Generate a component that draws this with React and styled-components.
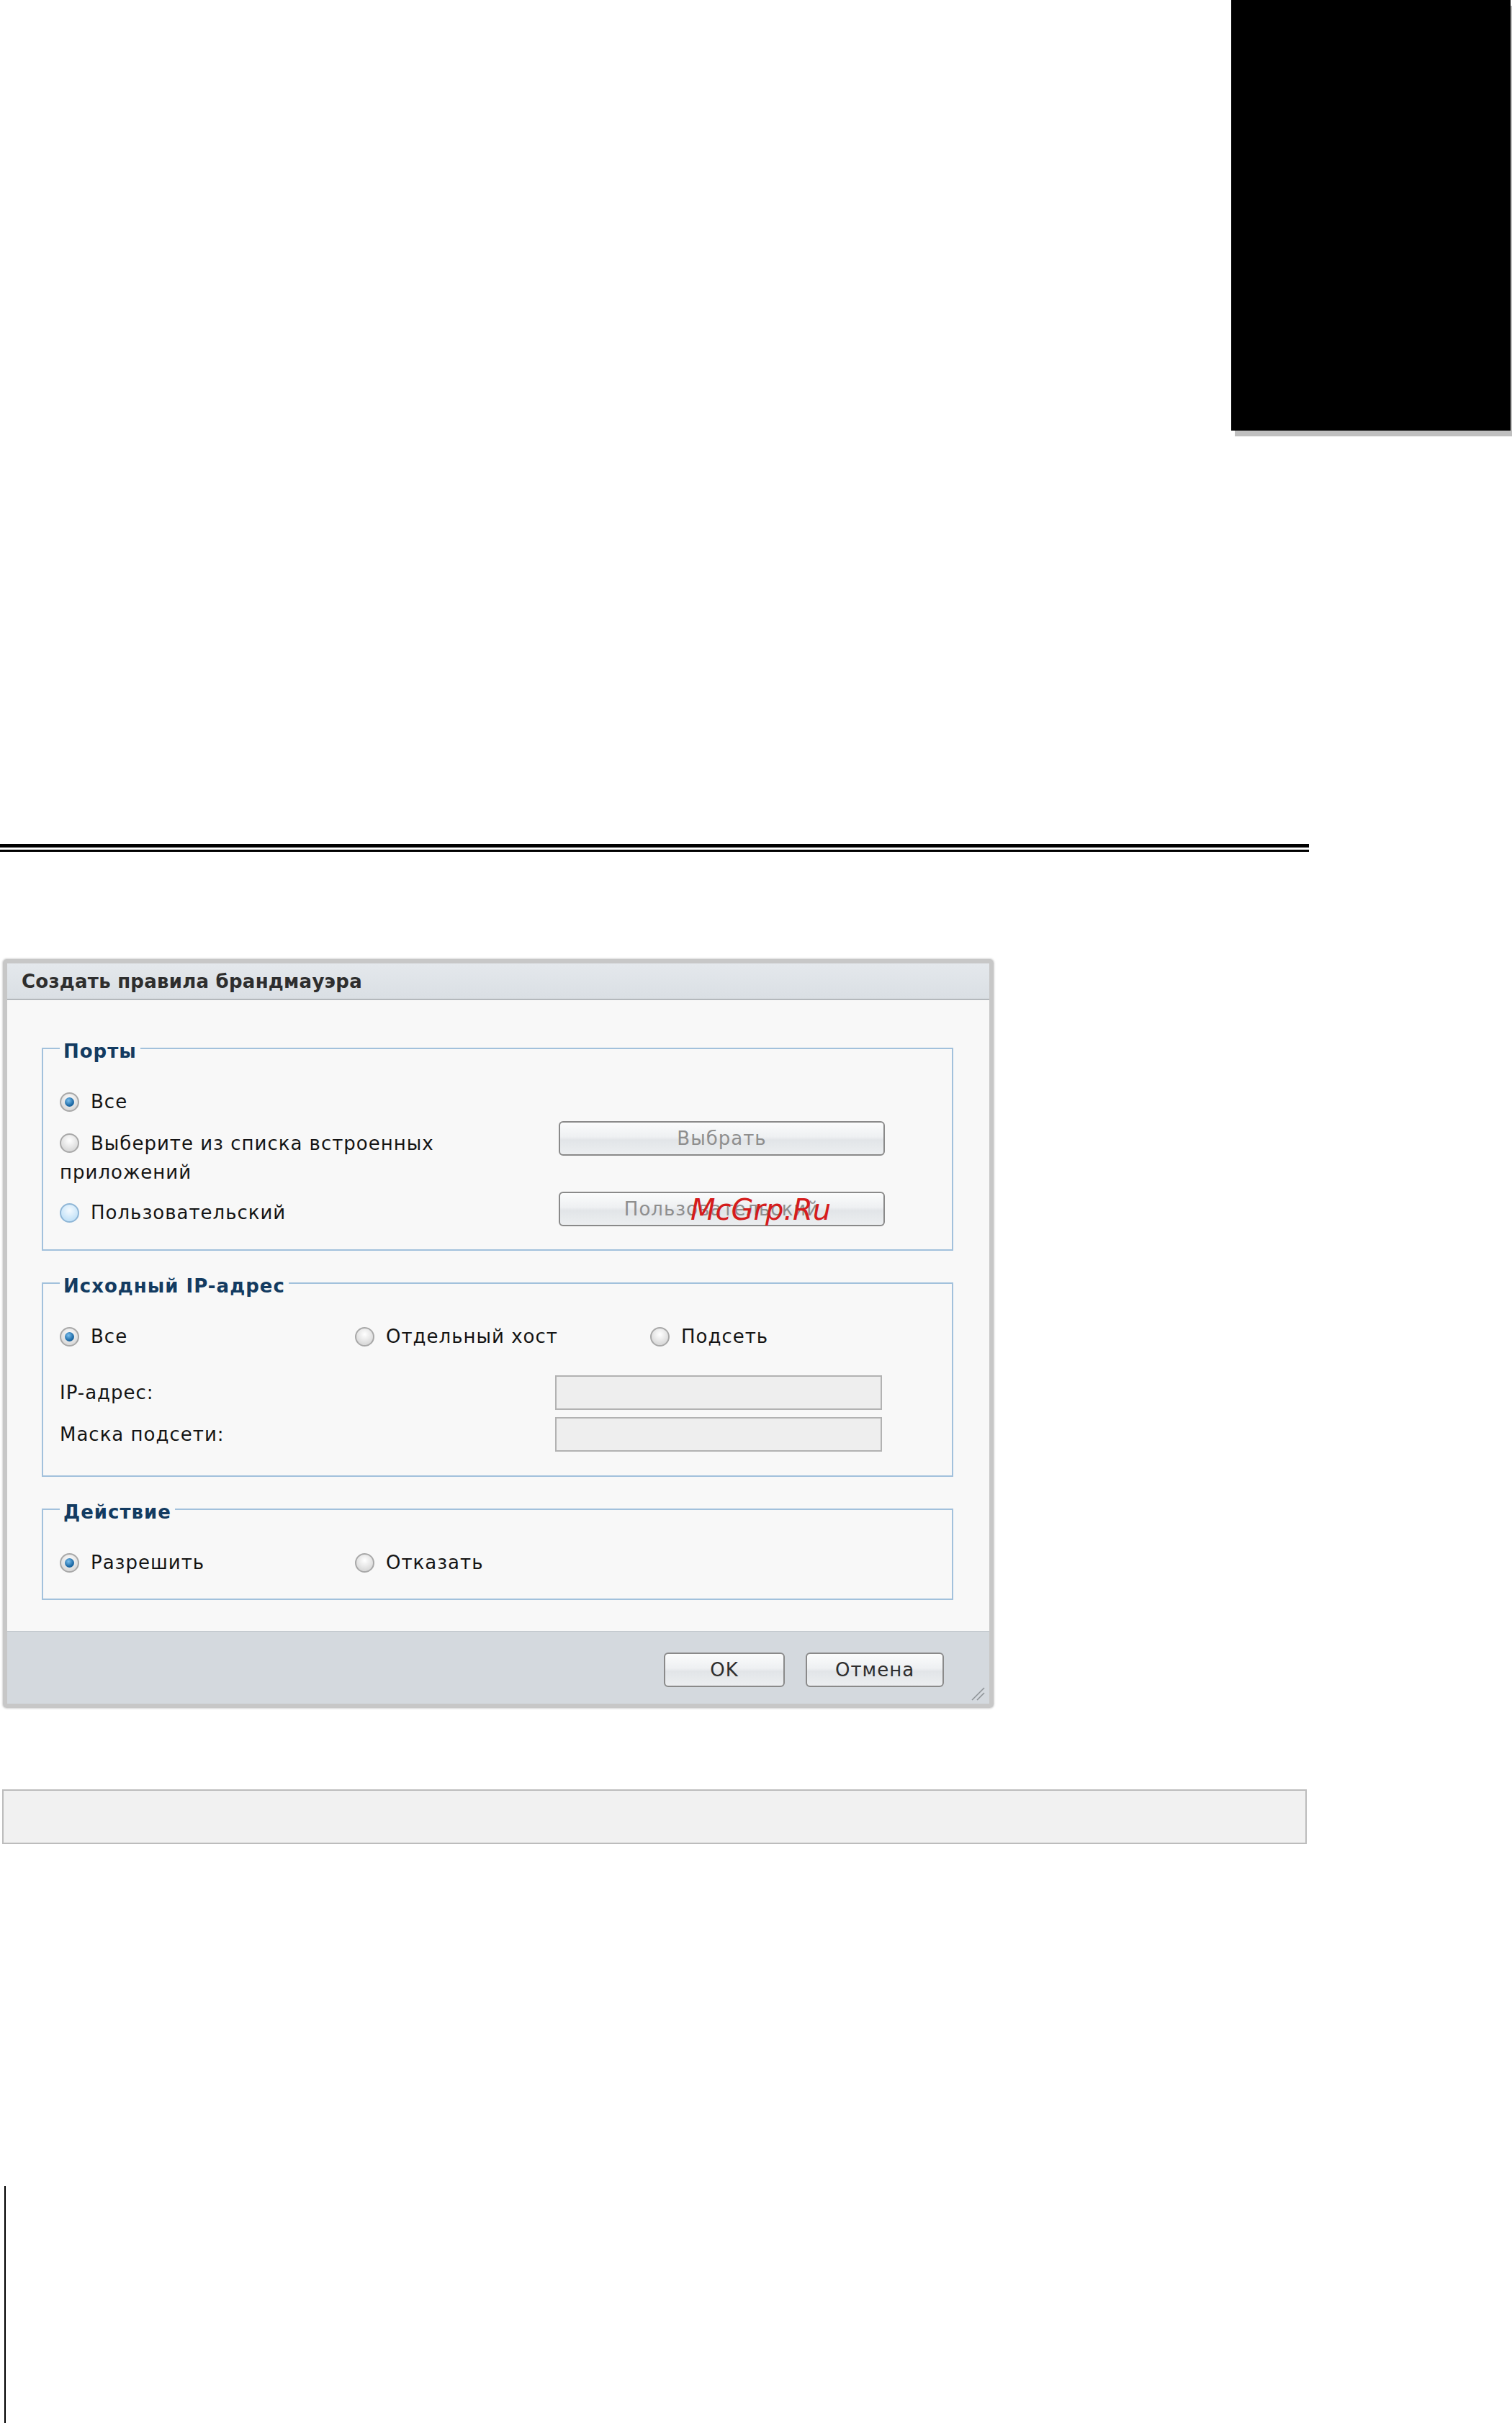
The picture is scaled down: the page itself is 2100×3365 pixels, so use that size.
import React from 'react';
import styled, { createGlobalStyle, css } from 'styled-components';

const Global = createGlobalStyle`
  html, body { margin: 0; padding: 0; background: #fff; }
  body { font-family: "DejaVu Sans", Verdana, sans-serif; }
`;

const textFont = css`
  font: 26px/40px "DejaVu Sans", Verdana, sans-serif;
  letter-spacing: 1px;
  color: #141414;
`;

const Page = styled.div`
  width: 2100px;
  height: 3365px;
  overflow: hidden;
  display: flex;
  flex-direction: column;
  background: #fff;
`;

const TopArea = styled.div`
  height: 1172px;
  flex-shrink: 0;
  display: flex;
  justify-content: flex-end;
  align-items: flex-start;
`;

const ChapterTab = styled.div`
  width: 388px;
  height: 598px;
  background: #000;
  box-shadow: 5px 8px 0 #bfbfbf;
  margin-right: 2px;
`;

const DoubleRule = styled.div`
  width: 1818px;
  height: 11px;
  flex-shrink: 0;
  box-sizing: border-box;
  border-top: 5px solid #000;
  border-bottom: 3px solid #000;
`;

const Dialog = styled.div`
  position: relative;
  flex-shrink: 0;
  margin: 149px 0 0 4px;
  width: 1376px;
  box-sizing: border-box;
  border: 6px solid #c7c7c7;
  border-radius: 5px;
  box-shadow: 0 0 3px rgba(0, 0, 0, 0.35);
  display: flex;
  flex-direction: column;
`;

const TitleBar = styled.div`
  height: 49px;
  border-bottom: 2px solid #b4b8bc;
  background: linear-gradient(#e4e8ec, #dadfe4);
  display: flex;
  align-items: center;
  padding: 0 20px;
  font: bold 26px "DejaVu Sans", Verdana, sans-serif;
  letter-spacing: 0.25px;
  color: #2e2e2e;
`;

const Body = styled.div`
  height: 877px;
  box-sizing: border-box;
  background: #f8f8f8;
  border-bottom: 1px solid #bfc5ca;
  padding: 47px 50px 0 48px;
  display: flex;
  flex-direction: column;
`;

const Group = styled.fieldset`
  margin: ${p => p.$mt || 0}px 0 0 0;
  padding: 34px 0 ${p => p.$pb}px 23px;
  border: 2px solid #a2c1dc;
  min-width: 0;
`;

const Legend = styled.legend`
  padding: 8px 5px 0;
  font: bold 26px/32px "DejaVu Sans", Verdana, sans-serif;
  letter-spacing: 1px;
  color: #133b61;
`;

const PortsGrid = styled.div`
  display: grid;
  grid-template-columns: 693px 453px;
  grid-template-rows: 40px auto auto;
  row-gap: 7px;
  align-items: start;
`;

const Choice = styled.label`
  display: flex;
  align-items: center;
  gap: 16px;
  min-height: 40px;
  margin-top: ${p => p.$mt || 0}px;
  ${textFont};
  white-space: nowrap;
`;

const Wrapping = styled.div`
  ${textFont};
  width: 620px;
  margin-top: ${p => p.$mt || 0}px;
`;

const RadioDot = styled.span`
  position: relative;
  display: inline-block;
  vertical-align: middle;
  flex: none;
  width: 27px;
  height: 27px;
  box-sizing: border-box;
  border-radius: 50%;
  border: 2px solid ${p => (p.$state === 'hover' ? '#8fb6d6' : '#a8a8a8')};
  background: ${p =>
    p.$state === 'hover'
      ? 'radial-gradient(circle at 50% 35%, #f4faff 0%, #bfe0f7 80%)'
      : 'radial-gradient(circle at 50% 35%, #ffffff 0%, #d4d4d4 85%)'};
  ${p =>
    p.$state === 'checked' &&
    css`
      &::after {
        content: '';
        position: absolute;
        left: 50%;
        top: 50%;
        width: 13px;
        height: 13px;
        margin: -6.5px 0 0 -6.5px;
        border-radius: 50%;
        background: radial-gradient(circle at 40% 35%, #7cc0ee 0%, #1d6aa6 60%, #0c4f86 100%);
      }
    `}
`;

const InlineRadio = styled(RadioDot)`
  margin: -4px 16px 0 0;
`;

const Button = styled.button`
  height: 48px;
  width: ${p => p.$w}px;
  margin-top: ${p => p.$mt || 0}px;
  box-sizing: border-box;
  border: 2px solid #8a8a8a;
  border-radius: 6px;
  background: linear-gradient(#fbfcfc 0%, #eef0f2 45%, #e2e5e8 55%, #eceef0 100%);
  font: 26px "DejaVu Sans", Verdana, sans-serif;
  letter-spacing: 1px;
  color: ${p => (p.$disabled ? '#8e8e8e' : '#2e2e2e')};
  padding: 0;
  display: flex;
  align-items: center;
  justify-content: center;
`;

const RadioRow = styled.div`
  display: grid;
  grid-template-columns: 410px 410px auto;
`;

const FieldGrid = styled.div`
  display: grid;
  grid-template-columns: 688px 454px;
  row-gap: 10px;
  margin-top: 34px;
  align-items: center;
`;

const FieldLabel = styled.span`
  ${textFont};
`;

const TextBox = styled.div`
  height: 48px;
  box-sizing: border-box;
  border: 2px solid #b2b2b2;
  background: #eeeeee;
`;

const Footer = styled.div`
  position: relative;
  height: 100px;
  box-sizing: border-box;
  background: #d4d9de;
  display: flex;
  justify-content: flex-end;
  align-items: flex-start;
  gap: 29px;
  padding: 29px 63px 0 0;
`;

const Grip = styled.svg`
  position: absolute;
  right: 6px;
  bottom: 4px;
`;

const Watermark = styled.span`
  position: absolute;
  left: 949px;
  top: 322px;
  font: italic 40px/40px "DejaVu Sans", Verdana, sans-serif;
  color: #d51c1c;
  pointer-events: none;
`;

const NoteBox = styled.div`
  flex-shrink: 0;
  margin: 113px 0 0 3px;
  width: 1812px;
  height: 76px;
  box-sizing: border-box;
  border: 2px solid #bcbcbc;
  background: #f1f1f1;
`;

const MarginBar = styled.div`
  flex-shrink: 0;
  margin: 475px 0 0 6px;
  width: 2px;
  height: 340px;
  background: #000;
`;

export default function App() {
  return (
    <>
      <Global />
      <Page>
        <TopArea>
          <ChapterTab />
        </TopArea>
        <DoubleRule />
        <Dialog>
          <TitleBar>Создать правила брандмауэра</TitleBar>
          <Body>
            <Group $pb={31}>
              <Legend>Порты</Legend>
              <PortsGrid>
                <Choice>
                  <RadioDot $state="checked" />
                  Все
                </Choice>
                <div />
                <Wrapping $mt={11}>
                  <InlineRadio $state="off" />
                  Выберите из списка встроенных приложений
                </Wrapping>
                <Button $w={453} $disabled>Выбрать</Button>
                <Choice $mt={9}>
                  <RadioDot $state="hover" />
                  Пользовательский
                </Choice>
                <Button $w={453} $disabled>Пользовательский</Button>
              </PortsGrid>
            </Group>
            <Group $mt={25} $pb={33}>
              <Legend>Исходный IP-адрес</Legend>
              <RadioRow>
                <Choice>
                  <RadioDot $state="checked" />
                  Все
                </Choice>
                <Choice>
                  <RadioDot $state="off" />
                  Отдельный хост
                </Choice>
                <Choice>
                  <RadioDot $state="off" />
                  Подсеть
                </Choice>
              </RadioRow>
              <FieldGrid>
                <FieldLabel>IP-адрес:</FieldLabel>
                <TextBox />
                <FieldLabel>Маска подсети:</FieldLabel>
                <TextBox />
              </FieldGrid>
            </Group>
            <Group $mt={25} $pb={30}>
              <Legend>Действие</Legend>
              <RadioRow>
                <Choice>
                  <RadioDot $state="checked" />
                  Разрешить
                </Choice>
                <Choice>
                  <RadioDot $state="off" />
                  Отказать
                </Choice>
              </RadioRow>
            </Group>
          </Body>
          <Footer>
            <Button $w={168}>OK</Button>
            <Button $w={192}>Отмена</Button>
            <Grip width="22" height="22" viewBox="0 0 22 22">
              <line x1="4" y1="21" x2="21" y2="4" stroke="#8d9296" strokeWidth="1.6" />
              <line x1="11" y1="21" x2="21" y2="11" stroke="#8d9296" strokeWidth="1.6" />
            </Grip>
          </Footer>
          <Watermark>McGrp.Ru</Watermark>
        </Dialog>
        <NoteBox />
        <MarginBar />
      </Page>
    </>
  );
}
